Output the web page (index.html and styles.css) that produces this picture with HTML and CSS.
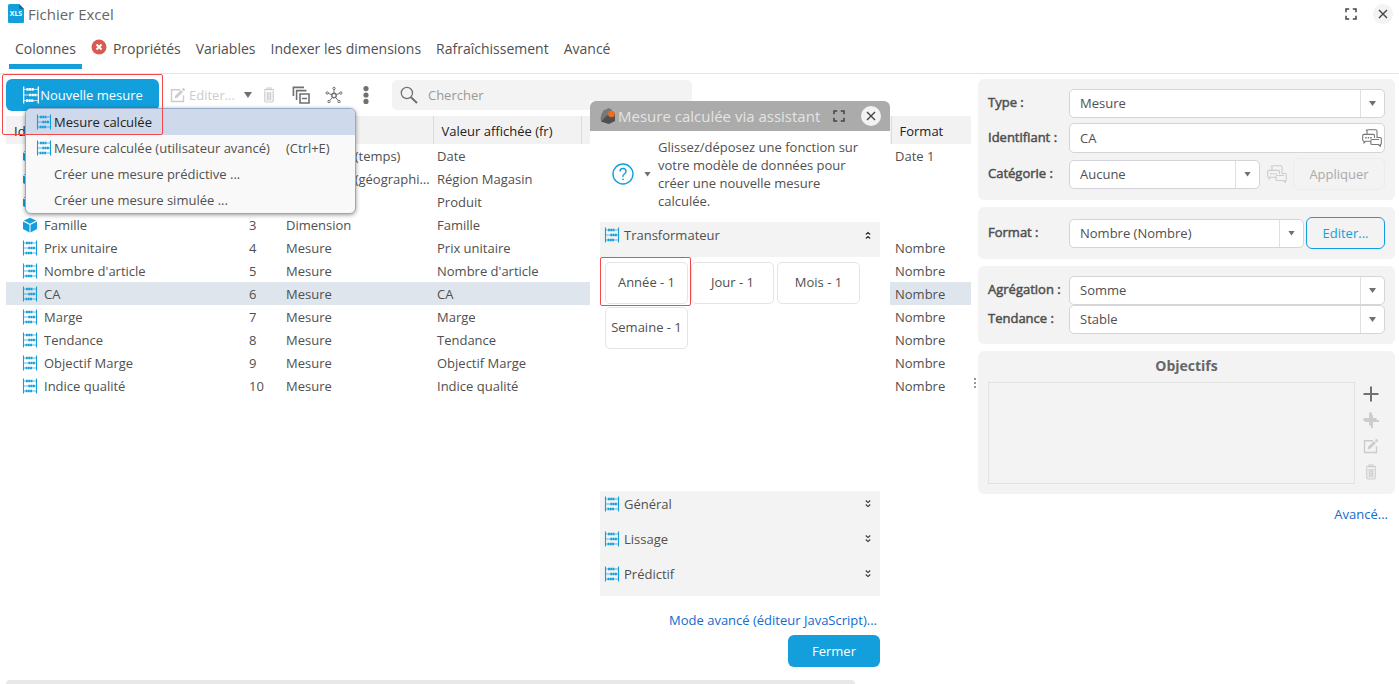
FILE: index.html
```html
<!DOCTYPE html>
<html lang="fr">
<head>
<meta charset="utf-8">
<title>Fichier Excel</title>
<link rel="stylesheet" href="styles.css">
</head>
<body>
<svg class="sprite" aria-hidden="true">
  <symbol id="abacus" viewBox="0 0 16 16">
    <g stroke="currentColor" fill="none">
      <path stroke-width="1.1" d="M1.5 .5v15M14.5 .5v15"/>
      <path stroke-width=".7" d="M1 3h14M1 8h14M1 13h14"/>
      <path stroke-width="2.4" stroke-dasharray="1.8 .5" d="M4 3h6.6M6.4 8h6.6M3.6 13h6.8"/>
    </g>
  </symbol>
  <symbol id="cube" viewBox="0 0 16 16">
    <path fill="currentColor" d="M8 .8 14.2 3.6 8 6.8 1.8 3.6zM1 4.6l6.5 3.2v7.6L1 12zM15 4.6 8.5 7.8v7.6L15 12z"/>
  </symbol>
  <symbol id="edit" viewBox="0 0 16 16">
    <path fill="none" stroke="currentColor" stroke-width="1.4" d="M10 2.7H1.5v11.8h12V8.2"/>
    <path fill="currentColor" d="M5.2 8.8 11 3l2 2-5.8 5.8-2.6.6zM11.8 2.2 13.3.8l2 2-1.5 1.4z"/>
  </symbol>
  <symbol id="trash" viewBox="0 0 16 16">
    <path fill="none" stroke="currentColor" stroke-width="1.2" d="M3 2.7h10M6 2.4V1h4v1.4M3.8 4v9.8q0 1.2 1.2 1.2h6q1.2 0 1.2-1.2V4M6.3 5v8.5M8 5v8.5M9.7 5v8.5"/>
  </symbol>
  <symbol id="expand" viewBox="0 0 12 12">
    <path fill="none" stroke="currentColor" stroke-width="1.5" d="M1 4.2V1h3.2M7.8 1H11v3.2M11 7.8V11H7.8M4.2 11H1V7.8"/>
  </symbol>
  <symbol id="close" viewBox="0 0 10 10">
    <path fill="none" stroke="currentColor" stroke-width="1.4" d="M1 1l8 8M9 1 1 9"/>
  </symbol>
  <symbol id="chevrons" viewBox="0 0 8 10">
    <path fill="none" stroke="#333" stroke-width="1.1" d="M1.8 1.5 4 3.6l2.200-2.100M1.800 5.500 4 7.600l2.200-2.100"/>
  </symbol>
  <symbol id="translate" viewBox="0 0 20 18">
    <g fill="none" stroke="currentColor" stroke-width="1.1">
      <path d="M5 5V2.2q0-1.4 1.4-1.4h7.2q1.4 0 1.4 1.4V9M5 1.5 4 .8"/>
      <path d="M8.5 12.2H3.8L2 14v-1.8Q.7 12 .7 10.800V6.800Q.7 5.400 2 5.400h9.200q1.300 0 1.300 1.400V9"/>
      <path d="M15 8.500h3q1.300 0 1.300 1.300v4.400q0 1.300-1 1.300v1.800l-2-1.800h-6q-1.500 0-1.500-1.300v-2.400q0-1.300 1.300-1.300h7"/>
      <path stroke-width="1.600" stroke-dasharray="1.500 1" d="M3.200 8.800h7"/>
    </g>
  </symbol>
  <symbol id="plus" viewBox="0 0 16 16">
    <path fill="none" stroke="currentColor" stroke-width="2" d="M8 .500v15M.500 8h15"/>
  </symbol>
</svg>

<header class="titlebar">
  <svg class="logo" viewBox="0 0 16 19" aria-hidden="true">
    <path fill="#129fdb" d="M1.500 0H11l5 5v12.500q0 1.500-1.500 1.500h-13Q0 19 0 17.500v-16Q0 0 1.500 0z"/>
    <path fill="#0b6f9c" d="M11 0l5 5h-4q-1 0-1-1z"/>
    <text x="8" y="12" text-anchor="middle">XLS</text>
  </svg>
  <h1>Fichier Excel</h1>
  <button class="icon-btn win-expand" aria-label="Agrandir"><svg class="i12"><use href="#expand"/></svg></button>
  <button class="icon-btn round" aria-label="Fermer la fenêtre"><svg class="i10"><use href="#close"/></svg></button>
</header>

<nav class="tabs">
  <a class="tab active" href="#colonnes">Colonnes</a>
  <a class="tab" href="#proprietes"><svg class="error" viewBox="0 0 16 16"><circle cx="8" cy="8" r="7.500" fill="#d85a50"/><path d="M5.500 5.500l5 5M10.500 5.500l-5 5" stroke="#fff" stroke-width="2"/></svg>Propriétés</a>
  <a class="tab" href="#variables">Variables</a>
  <a class="tab" href="#indexer">Indexer les dimensions</a>
  <a class="tab" href="#rafraichissement">Rafraîchissement</a>
  <a class="tab" href="#avance">Avancé</a>
</nav>

<main class="workspace">
  <section class="columns">
    <div class="toolbar">
      <div class="menu-anchor">
        <button class="btn primary new-measure"><svg class="i18"><use href="#abacus"/></svg>Nouvelle mesure</button>
        <div class="menu" role="menu">
          <button class="menu-item current" role="menuitem"><svg class="i16"><use href="#abacus"/></svg><span>Mesure calculée</span></button>
          <button class="menu-item" role="menuitem"><svg class="i16"><use href="#abacus"/></svg><span>Mesure calculée (utilisateur avancé)</span><kbd>(Ctrl+E)</kbd></button>
          <button class="menu-item" role="menuitem"><span class="i16"></span><span>Créer une mesure prédictive ...</span></button>
          <button class="menu-item" role="menuitem"><span class="i16"></span><span>Créer une mesure simulée ...</span></button>
        </div>
        <div class="mark mark-menu"></div>
      </div>
      <button class="tool edit-tool" disabled><svg class="i16"><use href="#edit"/></svg>Editer...</button>
      <button class="tool edit-more" aria-label="Plus d'options d'édition"><span class="caret"></span></button>
      <button class="tool" disabled aria-label="Supprimer"><svg class="i16"><use href="#trash"/></svg></button>
      <button class="tool" aria-label="Tout réduire"><svg class="i18" viewBox="0 0 18 18"><path fill="none" stroke="currentColor" stroke-width="1.600" d="M1.400 10V1.400H12M4.600 14V4.600H14.500M8 8h9v9H8zM10 12.500h5"/></svg></button>
      <button class="tool" aria-label="Relations"><svg class="i18" viewBox="0 0 18 18"><g fill="none" stroke="currentColor"><circle cx="9" cy="9.500" r="2.200" stroke-width="1.400"/><circle cx="9" cy="2.400" r="1.200"/><circle cx="2.200" cy="7" r="1.200"/><circle cx="15.800" cy="7" r="1.200"/><circle cx="4" cy="15.500" r="1.200"/><circle cx="14" cy="15.500" r="1.200"/><path d="M9 3.600v3.700M3.400 7.400l3.400 1.300M14.600 7.400l-3.400 1.300M4.800 14.500l2.700-3.200M13.200 14.500l-2.700-3.200"/></g></svg></button>
      <button class="tool more" aria-label="Autres actions"><svg viewBox="0 0 6 18"><path fill="currentColor" d="M.400 2.600a2.600 2.600 0 1 1 5.200 0a2.600 2.600 0 1 1-5.200 0M.400 9a2.600 2.600 0 1 1 5.200 0a2.600 2.600 0 1 1-5.200 0M.400 15.400a2.600 2.600 0 1 1 5.200 0a2.600 2.600 0 1 1-5.200 0"/></svg></button>
      <label class="search"><svg class="i18" viewBox="0 0 18 18"><path fill="none" stroke="currentColor" stroke-width="1.300" d="M12.500 7a5.600 5.600 0 1 1-11.200 0a5.600 5.600 0 1 1 11.200 0"/><path stroke="currentColor" stroke-width="2" d="M11 11.200l6 5.800"/></svg><input type="search" placeholder="Chercher" aria-label="Chercher"></label>
    </div>

    <div class="table-wrap">
      <table>
        <colgroup><col class="c-id"><col class="c-num"><col class="c-type"><col class="c-val"><col><col class="c-fmt"></colgroup>
        <thead><tr><th>Identifiant</th><th></th><th></th><th class="sep">Valeur affichée (fr)</th><th class="sep">Catégorie</th><th class="sep">Format</th></tr></thead>
        <tbody>
          <tr><td><svg class="i16"><use href="#cube"/></svg>Date</td><td>0</td><td>Dimension (temps)</td><td>Date</td><td></td><td>Date 1</td></tr>
          <tr><td><svg class="i16"><use href="#cube"/></svg>Région Magasin</td><td>1</td><td>Dimension (géographique)</td><td>Région Magasin</td><td></td><td></td></tr>
          <tr><td><svg class="i16"><use href="#cube"/></svg>Produit</td><td>2</td><td>Dimension</td><td>Produit</td><td></td><td></td></tr>
          <tr><td><svg class="i16"><use href="#cube"/></svg>Famille</td><td>3</td><td>Dimension</td><td>Famille</td><td></td><td></td></tr>
          <tr><td><svg class="i16"><use href="#abacus"/></svg>Prix unitaire</td><td>4</td><td>Mesure</td><td>Prix unitaire</td><td></td><td>Nombre</td></tr>
          <tr><td><svg class="i16"><use href="#abacus"/></svg>Nombre d'article</td><td>5</td><td>Mesure</td><td>Nombre d'article</td><td></td><td>Nombre</td></tr>
          <tr class="selected"><td><svg class="i16"><use href="#abacus"/></svg>CA</td><td>6</td><td>Mesure</td><td>CA</td><td></td><td>Nombre</td></tr>
          <tr><td><svg class="i16"><use href="#abacus"/></svg>Marge</td><td>7</td><td>Mesure</td><td>Marge</td><td></td><td>Nombre</td></tr>
          <tr><td><svg class="i16"><use href="#abacus"/></svg>Tendance</td><td>8</td><td>Mesure</td><td>Tendance</td><td></td><td>Nombre</td></tr>
          <tr><td><svg class="i16"><use href="#abacus"/></svg>Objectif Marge</td><td>9</td><td>Mesure</td><td>Objectif Marge</td><td></td><td>Nombre</td></tr>
          <tr><td><svg class="i16"><use href="#abacus"/></svg>Indice qualité</td><td>10</td><td>Mesure</td><td>Indice qualité</td><td></td><td>Nombre</td></tr>
        </tbody>
      </table>
    </div>
    <div class="scrollbar"></div>

    <div class="dialog" role="dialog" aria-labelledby="dlg-title">
      <div class="dialog-head">
        <svg class="i16" viewBox="0 0 16 16" aria-hidden="true"><path fill="#777" d="M3.500 2.500 9 0l3 2v11l-5 2.500-6-2.500Q-.500 8 3.500 2.500z"/><path fill="#505050" d="M7 7.500 15 5v8l-6 3-8-2.500z"/><circle cx="11.500" cy="6" r="3.300" fill="#ef6d1f"/></svg>
        <h2 id="dlg-title">Mesure calculée via assistant</h2>
        <button class="icon-btn" aria-label="Agrandir l'assistant"><svg class="i12"><use href="#expand"/></svg></button>
        <button class="icon-btn round" aria-label="Fermer l'assistant"><svg class="i10"><use href="#close"/></svg></button>
      </div>
      <div class="dialog-body">
        <div class="help">
          <button class="icon-btn help-btn" aria-label="Aide"><svg viewBox="0 0 22 22"><circle cx="11" cy="11" r="10" fill="none" stroke="currentColor" stroke-width="1.400"/><path fill="none" stroke="currentColor" stroke-width="1.400" d="M8 8.500Q8 5.500 11 5.500T14 8.300Q14 10 12.300 11T11 14"/><circle cx="11" cy="16.300" r=".9" fill="currentColor"/></svg></button>
          <span class="caret"></span>
          <p>Glissez/déposez une fonction sur votre modèle de données pour créer une nouvelle mesure calculée.</p>
        </div>
        <button class="accordion open"><svg class="i16"><use href="#abacus"/></svg>Transformateur<svg class="chev"><use href="#chevrons"/></svg></button>
        <div class="tiles">
          <div class="tile-slot"><button class="tile">Année - 1</button><div class="mark mark-tile"></div></div>
          <button class="tile">Jour - 1</button>
          <button class="tile">Mois - 1</button>
          <button class="tile">Semaine - 1</button>
        </div>
        <button class="accordion"><svg class="i16"><use href="#abacus"/></svg>Général<svg class="chev"><use href="#chevrons"/></svg></button>
        <button class="accordion"><svg class="i16"><use href="#abacus"/></svg>Lissage<svg class="chev"><use href="#chevrons"/></svg></button>
        <button class="accordion"><svg class="i16"><use href="#abacus"/></svg>Prédictif<svg class="chev"><use href="#chevrons"/></svg></button>
        <a class="link" href="#javascript">Mode avancé (éditeur JavaScript)...</a>
        <button class="btn primary close-btn">Fermer</button>
      </div>
    </div>
  </section>

  <div class="splitter"><i></i><i></i><i></i></div>

  <aside class="details">
    <section class="panel general">
      <div class="row"><label for="type">Type :</label><div class="select"><select id="type"><option>Mesure</option></select><span class="arrow"></span></div></div>
      <div class="row"><label for="ident">Identifiant :</label><div class="field"><input id="ident" type="text" value="CA"><button class="icon-btn" aria-label="Traduire l'identifiant"><svg class="tr"><use href="#translate"/></svg></button></div></div>
      <div class="row"><label for="cat">Catégorie :</label><div class="select"><select id="cat"><option>Aucune</option></select><span class="arrow"></span></div><button class="icon-btn tr-cat" disabled aria-label="Traduire la catégorie"><svg class="tr"><use href="#translate"/></svg></button><button class="btn apply" disabled>Appliquer</button></div>
    </section>
    <section class="panel format">
      <div class="row"><label for="fmt">Format :</label><div class="select"><select id="fmt"><option>Nombre (Nombre)</option></select><span class="arrow"></span></div><button class="btn outline">Editer...</button></div>
    </section>
    <section class="panel">
      <div class="row"><label for="agg">Agrégation :</label><div class="select"><select id="agg"><option>Somme</option></select><span class="arrow"></span></div></div>
      <div class="row"><label for="trend">Tendance :</label><div class="select"><select id="trend"><option>Stable</option></select><span class="arrow"></span></div></div>
    </section>
    <section class="panel goals">
      <h3>Objectifs</h3>
      <div class="goals-body">
        <div class="goals-list"></div>
        <div class="goals-tools">
          <button class="tool" aria-label="Ajouter"><svg class="i16"><use href="#plus"/></svg></button>
          <button class="tool" disabled aria-label="Dupliquer"><svg class="i16" viewBox="0 0 16 16"><path fill="none" stroke="currentColor" stroke-width="2.800" d="M7.500 .500v13M.500 7.500h13"/><path fill="none" stroke="currentColor" stroke-width="2" d="M9 3v13M2 9h14"/></svg></button>
          <button class="tool" disabled aria-label="Modifier"><svg class="i16"><use href="#edit"/></svg></button>
          <button class="tool" disabled aria-label="Supprimer l'objectif"><svg class="i16"><use href="#trash"/></svg></button>
        </div>
      </div>
    </section>
    <a class="link" href="#plus">Avancé...</a>
  </aside>
</main>
</body>
</html>
```
FILE: styles.css
```css
* { box-sizing: border-box; }

body {
  margin: 0;
  height: 100vh;
  display: flex;
  flex-direction: column;
  overflow: hidden;
  background: #fff;
  color: #505050;
  font: 13px/18px "Open Sans", "Noto Sans", sans-serif;
}

button, input, select { font: inherit; color: inherit; }
button { padding: 0; border: 0; background: none; }
h1, h2, h3, p { margin: 0; font-weight: 400; }
a { text-decoration: none; }
svg { flex: none; display: block; }

.sprite { position: absolute; width: 0; height: 0; }
.i10 { width: 10px; height: 10px; }
.i12 { width: 12px; height: 12px; }
.i16 { width: 16px; height: 16px; flex: none; }
.i18 { width: 18px; height: 18px; }

.icon-btn { display: flex; align-items: center; justify-content: center; color: #444; }
.icon-btn:disabled { color: #ccc; }
.round { width: 20px; height: 20px; border-radius: 50%; background: #f3f3f3; }

.caret {
  width: 7px;
  height: 5px;
  background: #707070;
  clip-path: polygon(0 0, 100% 0, 50% 100%);
}
.toolbar .caret { width: 8px; height: 6px; }

/* Title bar and tabs */
.titlebar {
  display: flex;
  align-items: center;
  height: 27px;
  padding: 0 6px 0 8px;
  gap: 4px;
}
.titlebar h1 { flex: 1; font-size: 15px; color: #666; }
.logo { width: 16px; height: 19px; }
.logo text { fill: #fff; font-size: 7px; font-weight: 700; }
.win-expand { margin-right: 12px; }

.tabs {
  display: flex;
  gap: 3px;
  height: 47px;
  padding: 4px 9px;
  border-bottom: 1px solid #e4e4e4;
}
.tab {
  display: flex;
  align-items: center;
  gap: 6px;
  padding: 0 6px;
  font-size: 14px;
  color: #505050;
  border-bottom: 5px solid transparent;
  border-top: 2px solid transparent;
}
.tab.active { border-bottom-color: #129fdb; }
.error { width: 16px; height: 16px; margin-bottom: 3px; }

.workspace { flex: 1; display: flex; min-height: 0; padding: 5px 4px 0 6px; }

/* Buttons */
.btn {
  height: 32px;
  border-radius: 6px;
  display: flex;
  align-items: center;
  justify-content: center;
  font-size: 13px;
}
.primary { background: #129fdb; color: #fff; }
.outline { width: 79px; border: 1px solid #129fdb; color: #129fdb; }
.apply { width: 92px; border: 1px solid #ececec; color: #aaa; }

/* Column list */
.columns {
  position: relative;
  flex: 1;
  min-width: 0;
  display: flex;
  flex-direction: column;
}
.toolbar { display: flex; align-items: center; height: 32px; margin-bottom: 5px; }
.menu-anchor { position: relative; margin-right: 11px; }
.new-measure { width: 153px; }
.tool { display: flex; align-items: center; gap: 3px; color: #707070; margin-right: 15px; }
.tool:disabled { color: #ccc; }
.edit-tool { margin-right: 9px; }
.edit-more { margin-right: 9px; }
.more { margin: 0 23px 0 5px; }
.more svg { width: 6px; height: 18px; }
.search {
  width: 300px;
  height: 30px;
  display: flex;
  align-items: center;
  gap: 8px;
  padding: 0 8px;
  border-radius: 5px;
  background: #f3f3f3;
  color: #707070;
}
.search input { flex: 1; min-width: 0; border: 0; background: none; outline: 0; padding: 0 2px; }
.search input::placeholder { color: #999; }

.menu {
  position: absolute;
  z-index: 5;
  top: 29px;
  left: 19px;
  width: 331px;
  border: 1px solid #93a9c8;
  border-radius: 6px;
  background: #f9f9f9;
  box-shadow: 0 1px 4px rgba(0, 0, 0, .4);
  overflow: hidden;
}
.menu-item { display: flex; align-items: center; gap: 2px; width: 100%; height: 26px; padding-left: 10px; }
.menu-item svg, td svg, .accordion svg { color: #129fdb; }
.menu-item.current { background: #cfd9ec; color: #222; }
.menu-item kbd { margin-left: 14px; font: inherit; }

.mark { position: absolute; z-index: 6; border: 1px solid #f4484c; border-radius: 2px; pointer-events: none; }
.mark-menu { top: -5px; left: -4px; width: 161px; height: 61px; }
.mark-tile { top: -5px; left: -5px; width: 91px; height: 49px; }

.table-wrap { flex: 1; min-height: 0; overflow: hidden; }
table { width: 100%; table-layout: fixed; border-collapse: collapse; }
.c-id { width: 239px; }
.c-num { width: 37px; }
.c-type { width: 151px; }
.c-val { width: 148px; }
.c-fmt { width: 80px; }
th {
  height: 28px;
  padding: 2px 8px 0;
  background: #f2f2f2;
  color: #222;
  font-weight: 400;
  text-align: left;
  white-space: nowrap;
  overflow: hidden;
}
th.sep { border-left: 1px solid #dcdcdc; }
td {
  height: 23px;
  padding: 0 0 0 4px;
  white-space: nowrap;
  overflow: hidden;
  text-overflow: ellipsis;
}
td svg { display: inline-block; vertical-align: top; margin: 1px 6px 0 12px; }
.selected { background: #dfe5ed; }
.scrollbar { width: 88%; height: 4px; border-radius: 4px 4px 0 0; background: #e8e8e8; }

/* Assistant window */
.dialog { position: absolute; z-index: 3; left: 584px; top: 22px; width: 300px; background: #fff; }
.dialog-head {
  display: flex;
  align-items: center;
  height: 30px;
  padding: 0 9px 0 10px;
  gap: 2px;
  border-radius: 6px 6px 0 0;
  background: #ababab;
}
.dialog-head h2 { flex: 1; font-size: 15px; color: #e4e4e4; white-space: nowrap; }
.dialog-head .icon-btn + .icon-btn { margin-left: 14px; }
.dialog-body { display: flex; flex-direction: column; padding: 7px 10px; }
.help { display: flex; align-items: center; height: 72px; margin-bottom: 12px; padding: 0 16px 0 12px; }
.help p { flex: 1; margin-left: 7px; }
.help-btn { color: #129fdb; margin-right: 10px; }
.help-btn svg { width: 22px; height: 22px; }
.accordion {
  display: flex;
  align-items: center;
  gap: 4px;
  height: 35px;
  padding: 0 8px 9px 4px;
  background: #f3f3f3;
}
.accordion .chev { width: 8px; height: 10px; margin-left: auto; }
.open .chev { rotate: 180deg; }
.tiles {
  display: flex;
  flex-wrap: wrap;
  align-content: flex-start;
  gap: 3px;
  height: 234px;
  padding: 5px;
}
.tile-slot { position: relative; }
.tile { width: 83px; height: 42px; padding-bottom: 2px; border: 1px solid #e4e4e4; border-radius: 5px; background: #fff; white-space: nowrap; }
.link { align-self: flex-end; color: #0f6cd0; }
.dialog .link { margin: 15px 3px 6px; }
.close-btn { align-self: flex-end; width: 92px; }

.splitter { width: 7px; display: flex; flex-direction: column; align-items: center; gap: 2px; padding-top: 299px; }
.splitter i { width: 2px; height: 2px; background: #999; }

/* Column details */
.details { width: 417px; display: flex; flex-direction: column; gap: 7px; }
.panel { padding: 10px; border-radius: 6px; background: #f3f3f3; }
.general { display: flex; flex-direction: column; gap: 5px; height: 121px; }
.format { height: 52px; }
.row { display: flex; align-items: center; }
.row label { width: 81px; -webkit-text-stroke: 0.5px currentColor; padding-bottom: 3px; }
.select, .field {
  flex: 1;
  min-width: 0;
  display: flex;
  height: 29px;
  border: 1px solid #d4d4da;
  border-radius: 5px;
  background: #fff;
}
.field { height: 30px; padding-right: 2px; }
.field .icon-btn { color: #777; }
.select select, .field input {
  flex: 1;
  min-width: 0;
  appearance: none;
  border: 0;
  outline: 0;
  background: none;
  padding: 0 10px;
}
.select select { padding-bottom: 1px; }
.arrow { width: 24px; display: flex; align-items: center; justify-content: center; border-left: 1px solid #e0e0e0; pointer-events: none; }
.arrow::after { content: ""; width: 7px; height: 5px; background: #707070; clip-path: polygon(0 0, 100% 0, 50% 100%); }
.tr { width: 20px; height: 18px; }
.tr-cat { margin: 0 6px 0 7px; }
.outline { margin-left: 2px; }
.goals { padding-top: 6px; }
.goals h3 { font-size: 14px; font-weight: 700; text-align: center; color: #666; margin-bottom: 7px; }
.goals-body { display: flex; gap: 8px; }
.goals-list { flex: 1; height: 102px; border: 1px solid #e2e2e2; }
.goals-tools { display: flex; flex-direction: column; gap: 10px; padding: 4px 0; }
.goals-tools .tool { margin-right: 6px; }
.details .link { margin: 4px 7px 0; }
```
